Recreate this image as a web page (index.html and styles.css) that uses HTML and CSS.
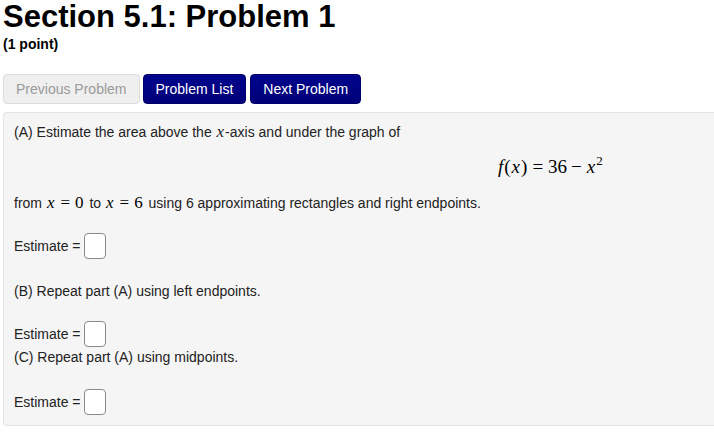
FILE: index.html
```html
<!DOCTYPE html>
<html>
<head>
<meta charset="utf-8">
<link rel="stylesheet" href="styles.css">
</head>
<body>
<div class="page">
  <h2 class="title">Section 5.1: Problem 1</h2>
  <div class="points">(1 point)</div>
  <div class="nav">
    <span class="btn btn-disabled">Previous Problem</span>
    <span class="btn btn-primary">Problem List</span>
    <span class="btn btn-primary">Next Problem</span>
  </div>
  <div class="well">
    <p class="line">(A) Estimate the area above the <span class="mi">x</span>-axis and under the graph of</p>
    <div class="display"><span class="mi">f</span><span class="mo">(</span><span class="mi">x</span><span class="mo">)</span><span class="rel">=</span><span class="mn">36</span><span class="bin">−</span><span class="mi">x</span><sup class="sup">2</sup></div>
    <p class="line from">from <span class="mi">x</span><span class="rel">=</span><span class="mn">0</span> to <span class="mi">x</span><span class="rel">=</span><span class="mn">6</span> using 6 approximating rectangles and right endpoints.</p>
    <div class="est est1">Estimate = <span class="box"></span></div>
    <p class="line partb">(B) Repeat part (A) using left endpoints.</p>
    <div class="est est2">Estimate = <span class="box"></span></div>
    <p class="line">(C) Repeat part (A) using midpoints.</p>
    <div class="est est3">Estimate = <span class="box"></span></div>
  </div>
</div>
</body>
</html>
```
FILE: styles.css
```css
html, body {
  margin: 0;
  padding: 0;
  background: #fff;
}
.page {
  padding: 0 0 0 3px;
  font-family: "Liberation Sans", Arial, sans-serif;
  color: #333;
}
.title {
  margin: 0;
  font-size: 31px;
  line-height: 34px;
  font-weight: bold;
  color: #000;
}
.points {
  margin-top: 2px;
  font-size: 14px;
  font-weight: bold;
  line-height: 16px;
  color: #000;
}
.nav {
  display: flex;
  gap: 3px;
  margin-top: 22px;
}
.btn {
  display: inline-block;
  height: 30px;
  box-sizing: border-box;
  padding: 0 12px;
  font-size: 14px;
  line-height: 28px;
  border: 1px solid transparent;
  border-radius: 4px;
}
.btn-disabled {
  background: #efefef;
  border-color: #dcdcdc;
  color: #9a9a9a;
}
.btn-primary {
  background: linear-gradient(#00058c, #000078);
  border-color: #00006a;
  color: #fff;
}
.btn-primary + .btn-primary { margin-left: 1px; }
.well {
  margin-top: 8px;
  box-sizing: border-box;
  background: #f5f5f5;
  border: 1px solid #e3e3e3;
  border-right: none;
  border-radius: 4px 0 0 4px;
  padding: 9px 10px 10px 10px;
  font-size: 14px;
  color: #222;
}
.line {
  margin: 0;
  line-height: 20px;
  height: 20px;
}
.mi {
  font-family: "Liberation Serif", "Times New Roman", serif;
  font-style: italic;
  font-size: 17px;
  padding: 0 1px;
}
.mn, .mo {
  font-family: "Liberation Serif", "Times New Roman", serif;
  font-size: 17px;
}
.rel {
  font-family: "Liberation Serif", serif;
  font-size: 17px;
  padding: 0 5px;
}
.bin {
  font-family: "Liberation Serif", serif;
  font-size: 17px;
  padding: 0 4px;
}
.display {
  margin-top: 15px;
  height: 20px;
  line-height: 20px;
  padding-left: 483px;
  color: #000;
  white-space: nowrap;
}
.display .mi, .display .mn, .display .mo, .display .rel, .display .bin {
  font-size: 19px;
}
.sup {
  font-family: "Liberation Serif", serif;
  font-size: 13px;
  vertical-align: 8px;
  line-height: 0;
}
.from { margin-top: 16px; }
.from .mi, .from .mn, .from .rel { color: #000; }
.from .mn { margin-right: 2px; }
.est {
  display: flex;
  align-items: center;
  height: 26px;
}
.est1 { margin-top: 20px; }
.est2 { margin-top: 20px; }
.est3 { margin-top: 22px; }
.partb { margin-top: 22px; }
.box {
  display: inline-block;
  width: 22px;
  height: 26px;
  box-sizing: border-box;
  margin-left: 3px;
  background: #fff;
  border: 1px solid #8a8a8a;
  border-radius: 4px;
}
```
